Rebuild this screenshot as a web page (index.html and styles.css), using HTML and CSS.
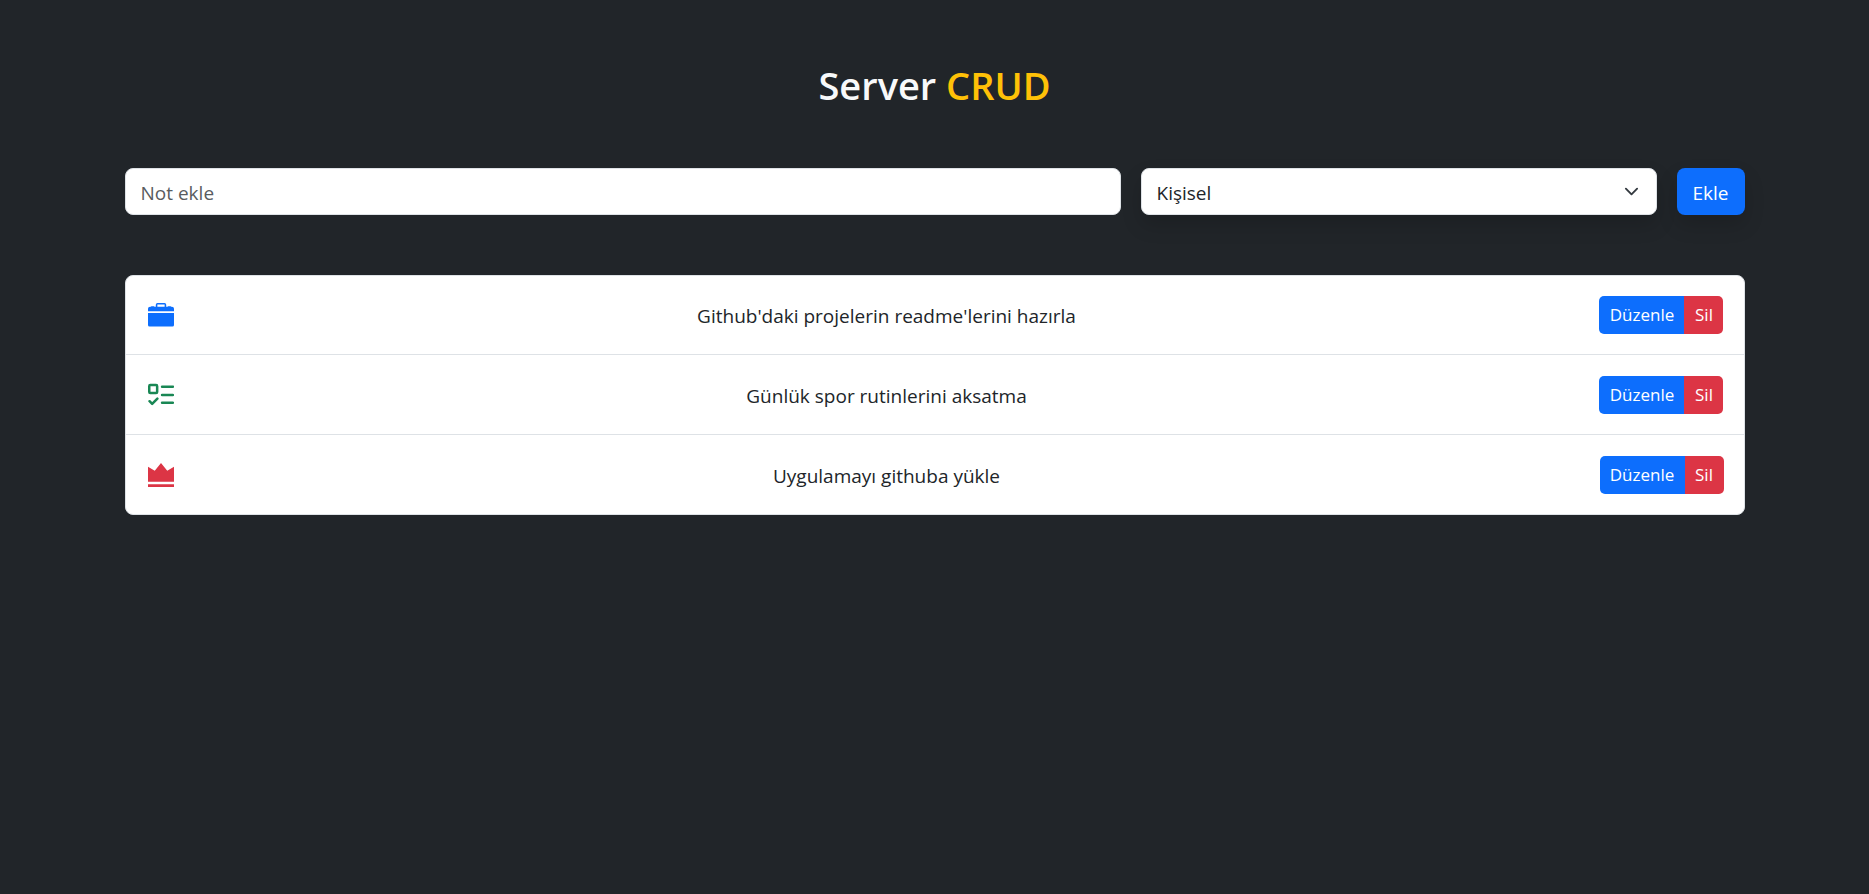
FILE: index.html
```html
<!DOCTYPE html>
<html lang="tr">
<head>
<meta charset="utf-8">
<meta name="viewport" content="width=device-width, initial-scale=1">
<title>Server CRUD</title>
<link rel="stylesheet" href="styles.css">
</head>
<body>
<main class="container">
  <h1 class="title">Server <span class="title-accent">CRUD</span></h1>
  <form class="note-form">
    <input class="field note-input" type="text" placeholder="Not ekle" aria-label="Not ekle">
    <div class="select-wrap">
      <select class="field category" aria-label="Kategori">
        <option>Kişisel</option>
        <option>İş</option>
        <option>Önemli</option>
      </select>
      <svg class="chevron" viewBox="0 0 16 16" aria-hidden="true"><path d="m2 5 6 6 6-6"/></svg>
    </div>
    <button class="btn btn-add" type="submit">Ekle</button>
  </form>
  <ul class="notes">
    <li class="note">
      <svg class="icon icon-work" viewBox="0 0 25 25" aria-hidden="true"><path fill-rule="evenodd" d="M7.5 4V2.600Q7.500 1 9.100 1H15.900Q17.500 1 17.500 2.600V4.500H19V4H22V4.500H23Q25 4.500 25 6.500V9H0V6.500Q0 4.500 2 4.500H3V4H6V4.500H7.500ZM9 2.500V4.500H16V2.500ZM0 10.500H25V22Q25 23.500 23.500 23.500H1.500Q0 23.500 0 22Z"/></svg>
      <span class="note-text">Github'daki projelerin readme'lerini hazırla</span>
      <div class="actions"><button class="btn btn-edit" type="button">Düzenle</button><button class="btn btn-delete" type="button">Sil</button></div>
    </li>
    <li class="note">
      <svg class="icon icon-personal" viewBox="0 0 25 25" aria-hidden="true"><rect x="1.200" y="3" width="7.600" height="7.600" rx="1"/><path d="M13.500 4.500H24M13.500 12.500H24M13.500 20H24M1.500 18.500 4 21 9 16"/></svg>
      <span class="note-text">Günlük spor rutinlerini aksatma</span>
      <div class="actions"><button class="btn btn-edit" type="button">Düzenle</button><button class="btn btn-delete" type="button">Sil</button></div>
    </li>
    <li class="note">
      <svg class="icon icon-important" viewBox="0 0 25 25" aria-hidden="true"><path d="M0 4.500 6.500 8.500 12.500 1 18.500 8.500 25 4.500V19H0ZM0 21.500H25V24H0Z"/></svg>
      <span class="note-text">Uygulamayı githuba yükle</span>
      <div class="actions"><button class="btn btn-edit" type="button">Düzenle</button><button class="btn btn-delete" type="button">Sil</button></div>
    </li>
  </ul>
</main>
</body>
</html>
```
FILE: styles.css
```css
* { box-sizing: border-box; }
body {
  margin: 0;
  min-height: 100vh;
  background: #212529;
  color: #212529;
  font-family: "Segoe UI", "Open Sans", "Noto Sans", sans-serif;
  font-size: 19px;
  line-height: 30px;
}
.container {
  max-width: 1650px;
  margin: 0 auto;
  padding: 60px 15px;
}
.title {
  margin: 0 0 60px;
  padding-top: 2px;
  color: #f8f9fa;
  font-size: 38px;
  font-weight: 600;
  line-height: 46px;
  text-align: center;
}
.title-accent { color: #ffc107; }
.note-form {
  display: flex;
  gap: 20px;
  margin-bottom: 60px;
}
.field {
  width: 100%;
  height: 47px;
  padding: 2px 15px 0;
  border: 1px solid #dee2e6;
  border-radius: 8px;
  background: #fff;
  color: #212529;
  font: inherit;
}
.note-input { flex: 1; min-width: 0; }
.note-input::placeholder { color: #595c5f; opacity: 1; }
.select-wrap {
  position: relative;
  flex: 0 0 516px;
  border-radius: 8px;
  box-shadow: 0 10px 20px rgba(0, 0, 0, 0.15);
}
.category { display: block; appearance: none; }
.chevron {
  position: absolute;
  top: 16px;
  right: 18px;
  width: 15px;
  height: 15px;
  fill: none;
  stroke: #343a40;
  stroke-width: 2;
  stroke-linecap: round;
  stroke-linejoin: round;
  pointer-events: none;
}
.btn {
  border: 0;
  color: #fff;
  font: inherit;
  cursor: pointer;
}
.btn-add {
  width: 68px;
  padding: 2px 0 0;
  border-radius: 8px;
  background: #0d6efd;
  box-shadow: 0 10px 20px rgba(0, 0, 0, 0.15);
}
.notes {
  margin: 0;
  padding: 0;
  border: 1px solid #dee2e6;
  border-radius: 8px;
  background: #fff;
  list-style: none;
}
.note {
  display: flex;
  align-items: center;
  justify-content: space-between;
  padding: 20px 20px 20px 22px;
}
.note + .note {
  min-height: 80px;
  border-top: 1px solid #dee2e6;
}
.note-text { padding-top: 2px; }
.icon { width: 26px; height: 26px; fill: currentColor; }
.icon-work { color: #0d6efd; }
.icon-personal {
  color: #198754;
  fill: none;
  stroke: currentColor;
  stroke-width: 2.4;
  stroke-linecap: round;
  stroke-linejoin: round;
}
.icon-important { color: #dc3545; }
.actions { display: flex; }
.actions .btn {
  height: 38px;
  padding: 0;
  font-size: 17px;
}
.actions .btn-edit {
  width: 85px;
  border-radius: 5px 0 0 5px;
  background: #0d6efd;
}
.actions .btn-delete {
  width: 39px;
  border-radius: 0 5px 5px 0;
  background: #dc3545;
}
```
